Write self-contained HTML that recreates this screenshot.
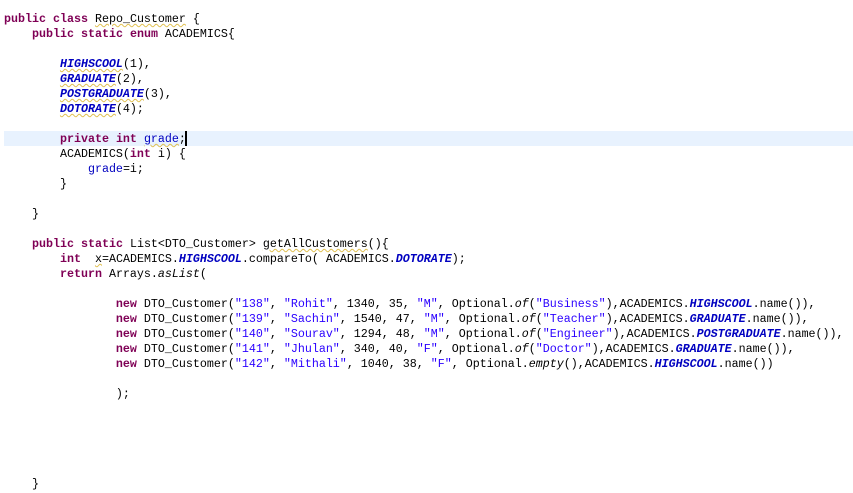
<!DOCTYPE html>
<html><head><meta charset="utf-8"><style>
html,body{margin:0;padding:0;background:#fff;width:853px;height:493px;overflow:hidden}
#code{position:absolute;left:4px;top:12px;font-family:"Liberation Mono",monospace;font-size:11.67px;color:#000}
#code div{height:15px;line-height:15px;white-space:pre;overflow:visible}
.k{color:#7f0055;font-weight:bold}
.s{color:#2a00ff}
.c{color:#0000c0;font-style:italic;font-weight:bold}
.f{color:#0000c0}
.i{font-style:italic}
.w{text-decoration:underline wavy #e0c050;text-decoration-thickness:1px}
.hl{position:absolute;left:4px;top:131px;width:849px;height:15px;background:#e8f2fe}
.cur{position:absolute;left:185px;top:131px;width:2px;height:15px;background:#000}
</style></head><body>
<div class="hl"></div><div class="cur"></div>
<div id="code">
<div><span class="k">public</span> <span class="k">class</span> <span class="w">Repo_Customer</span> {</div>
<div>    <span class="k">public</span> <span class="k">static</span> <span class="k">enum</span> ACADEMICS{</div>
<div> </div>
<div>        <span class="c w">HIGHSCOOL</span>(1),</div>
<div>        <span class="c w">GRADUATE</span>(2),</div>
<div>        <span class="c w">POSTGRADUATE</span>(3),</div>
<div>        <span class="c w">DOTORATE</span>(4);</div>
<div> </div>
<div>        <span class="k">private</span> <span class="k">int</span> <span class="f w">grade</span>;</div>
<div>        ACADEMICS(<span class="k">int</span> i) {</div>
<div>            <span class="f">grade</span>=i;</div>
<div>        }</div>
<div> </div>
<div>    }</div>
<div> </div>
<div>    <span class="k">public</span> <span class="k">static</span> List&lt;DTO_Customer&gt; <span class="w">getAllCustomers</span>(){</div>
<div>        <span class="k">int</span>  <span class="w">x</span>=ACADEMICS.<span class="c">HIGHSCOOL</span>.compareTo( ACADEMICS.<span class="c">DOTORATE</span>);</div>
<div>        <span class="k">return</span> Arrays.<span class="i">asList</span>(</div>
<div> </div>
<div>                <span class="k">new</span> DTO_Customer(<span class="s">"138"</span>, <span class="s">"Rohit"</span>, 1340, 35, <span class="s">"M"</span>, Optional.<span class="i">of</span>(<span class="s">"Business"</span>),ACADEMICS.<span class="c">HIGHSCOOL</span>.name()),</div>
<div>                <span class="k">new</span> DTO_Customer(<span class="s">"139"</span>, <span class="s">"Sachin"</span>, 1540, 47, <span class="s">"M"</span>, Optional.<span class="i">of</span>(<span class="s">"Teacher"</span>),ACADEMICS.<span class="c">GRADUATE</span>.name()),</div>
<div>                <span class="k">new</span> DTO_Customer(<span class="s">"140"</span>, <span class="s">"Sourav"</span>, 1294, 48, <span class="s">"M"</span>, Optional.<span class="i">of</span>(<span class="s">"Engineer"</span>),ACADEMICS.<span class="c">POSTGRADUATE</span>.name()),</div>
<div>                <span class="k">new</span> DTO_Customer(<span class="s">"141"</span>, <span class="s">"Jhulan"</span>, 340, 40, <span class="s">"F"</span>, Optional.<span class="i">of</span>(<span class="s">"Doctor"</span>),ACADEMICS.<span class="c">GRADUATE</span>.name()),</div>
<div>                <span class="k">new</span> DTO_Customer(<span class="s">"142"</span>, <span class="s">"Mithali"</span>, 1040, 38, <span class="s">"F"</span>, Optional.<span class="i">empty</span>(),ACADEMICS.<span class="c">HIGHSCOOL</span>.name())</div>
<div> </div>
<div>                );</div>
<div> </div>
<div> </div>
<div> </div>
<div> </div>
<div> </div>
<div>    }</div>
</div>
</body></html>
